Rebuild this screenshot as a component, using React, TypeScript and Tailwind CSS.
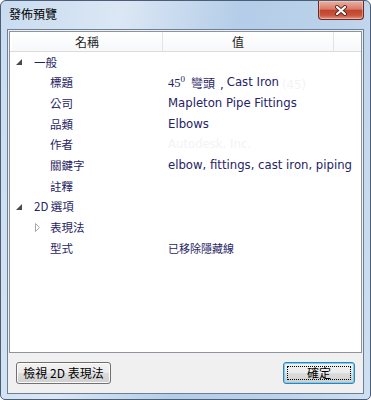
import React from "react";

const cjk = { fontFamily: '"Noto Sans CJK TC", "Noto Sans", sans-serif' };
const val = { fontFamily: '"DejaVu Sans", "Noto Sans CJK TC", sans-serif' };

function Expanded() {
  return (
    <svg width="6" height="6" viewBox="0 0 6 6" className="block">
      <polygon points="6,0 6,6 0,6" fill="#4a4a4a" />
    </svg>
  );
}

function Collapsed() {
  return (
    <svg width="6" height="9" viewBox="0 0 6 9" className="block">
      <polygon points="0.5,0.5 4.5,4.5 0.5,8.5" fill="#ffffff" stroke="#a6a6a6" strokeWidth="1" />
    </svg>
  );
}

function Row({ children, value }: { children: React.ReactNode; value?: React.ReactNode }) {
  return (
    <div className="flex h-[20.7px] items-center">
      <div className="flex w-[158px] shrink-0 items-center">{children}</div>
      <div className="flex items-center whitespace-nowrap">{value}</div>
    </div>
  );
}

function Name({ t }: { t: string }) {
  return (
    <span className="pl-[40px] text-[11.5px] leading-none text-[#1f2466]" style={cjk}>
      {t}
    </span>
  );
}

function Category({ t }: { t: string }) {
  return (
    <div className="flex items-center">
      <div className="ml-[6px] w-[18px]">
        <Expanded />
      </div>
      <span className="text-[11.5px] leading-none text-[#1f2466]" style={cjk}>
        {t}
      </span>
    </div>
  );
}

function V({ t, ghost }: { t: string; ghost?: boolean }) {
  return (
    <span
      className={"text-[11.7px] leading-none " + (ghost ? "text-[#f3f3f7]" : "text-[#1f2466]")}
      style={val}
    >
      {t}
    </span>
  );
}

export default function App() {
  return (
    <div className="flex h-[400px] w-[371px] flex-col overflow-hidden rounded-t-[6px] rounded-b-[5px] border border-[#4b5d77] bg-[linear-gradient(100deg,#c9dcf0_0%,#dbe7f4_28%,#b4cde8_55%,#bcd2ea_78%,#cfe0f1_100%)]">
      {/* title bar */}
      <div className="flex h-[28px] shrink-0 items-start">
        <span className="ml-[8px] mt-[6px] text-[12px] leading-[14px] text-black" style={cjk}>
          發佈預覽
        </span>
        <div className="ml-auto mr-[6px] flex h-[19px] w-[46px] items-center justify-center rounded-b-[4px] border border-t-0 border-[#6b2b22] bg-[linear-gradient(#eab0a2_0%,#d77c68_45%,#c2432e_52%,#c9553f_80%,#e29682_100%)] shadow-[inset_0_0_0_1px_rgba(255,220,210,0.45)]">
          <svg width="14" height="11" viewBox="0 0 14 11">
            <path d="M3 2 L11 9 M11 2 L3 9" stroke="#5a2a22" strokeWidth="4" strokeLinecap="round" />
            <path d="M3 2 L11 9 M11 2 L3 9" stroke="#ffffff" strokeWidth="2.2" strokeLinecap="round" />
          </svg>
        </div>
      </div>

      {/* client area */}
      <div className="mx-[6px] flex h-[365px] shrink-0 flex-col border border-[#6a7f9c] bg-[#f0f0f0]">
        {/* list */}
        <div className="mx-[1px] mt-[1px] h-[322px] shrink-0 border border-[#8e949c] bg-white">
          <div className="flex h-[20px] border-b border-[#dcdcdc] pl-[2px] pr-[1px]">
            <div className="flex w-[151px] items-center justify-center border-r border-[#e3e3e3] bg-[linear-gradient(#ffffff,#f7f8fa)]">
              <span className="text-[12px] leading-none text-[#1e1e1e]" style={cjk}>
                名稱
              </span>
            </div>
            <div className="flex w-[171px] items-center justify-center border-r border-[#e3e3e3] bg-[linear-gradient(#ffffff,#f7f8fa)] pr-[20px]">
              <span className="text-[12px] leading-none text-[#1e1e1e]" style={cjk}>
                值
              </span>
            </div>
            <div className="flex-1 bg-[linear-gradient(#ffffff,#f7f8fa)]" />
          </div>

          <div className="flex flex-col">
            <Row>
              <Category t="一般" />
            </Row>
            <Row
              value={
                <span className="flex items-center text-[#1f2466]">
                  <span className="text-[12.5px] leading-none" style={{ fontFamily: '"Liberation Serif", serif' }}>
                    45
                  </span>
                  <span
                    className="relative top-[-4px] text-[9px] leading-none"
                    style={{ fontFamily: '"Liberation Serif", serif' }}
                  >
                    0
                  </span>
                  <span className="ml-[6px] text-[12px] leading-none" style={cjk}>
                    彎頭
                  </span>
                  <span className="ml-[5px] mr-[3px]">
                    <V t="," />
                  </span>
                  <V t="Cast Iron" />
                  <span className="ml-[3px]">
                    <V t="(45)" ghost />
                  </span>
                </span>
              }
            >
              <Name t="標題" />
            </Row>
            <Row value={<V t="Mapleton Pipe Fittings" />}>
              <Name t="公司" />
            </Row>
            <Row value={<V t="Elbows" />}>
              <Name t="品類" />
            </Row>
            <Row value={<V t="Autodesk, Inc." ghost />}>
              <Name t="作者" />
            </Row>
            <Row value={<V t="elbow, fittings, cast iron, piping" />}>
              <Name t="關鍵字" />
            </Row>
            <Row>
              <Name t="註釋" />
            </Row>
            <Row>
              <Category t="2D 選項" />
            </Row>
            <Row>
              <div className="flex items-center">
                <div className="ml-[25px] w-[15px]">
                  <Collapsed />
                </div>
                <span className="text-[11.5px] leading-none text-[#1f2466]" style={cjk}>
                  表現法
                </span>
              </div>
            </Row>
            <Row
              value={
                <span className="text-[11px] leading-none text-[#1f2466]" style={cjk}>
                  已移除隱藏線
                </span>
              }
            >
              <Name t="型式" />
            </Row>
          </div>
        </div>

        {/* buttons */}
        <div className="mx-[8px] mt-[9px] flex h-[22px] shrink-0 justify-between">
          <button className="flex h-[22px] w-[95px] items-center justify-center rounded-[3px] border border-[#707070] bg-[linear-gradient(#f2f2f2_0%,#ebebeb_49%,#dddddd_50%,#cfcfcf_100%)] shadow-[inset_0_0_0_1px_#fbfbfb]">
            <span className="text-[12px] leading-none text-black" style={cjk}>
              檢視 2D 表現法
            </span>
          </button>
          <button className="relative flex h-[22px] w-[72px] items-center justify-center rounded-[3px] border border-[#3c7fb1] bg-[linear-gradient(#f2f2f2_0%,#ebebeb_49%,#dddddd_50%,#cfcfcf_100%)] shadow-[inset_0_0_0_1px_#6fd2fb]">
            <span className="absolute inset-[3px] border border-dotted border-black" />
            <span className="text-[12px] leading-none text-black" style={cjk}>
              確定
            </span>
          </button>
        </div>
      </div>
    </div>
  );
}
